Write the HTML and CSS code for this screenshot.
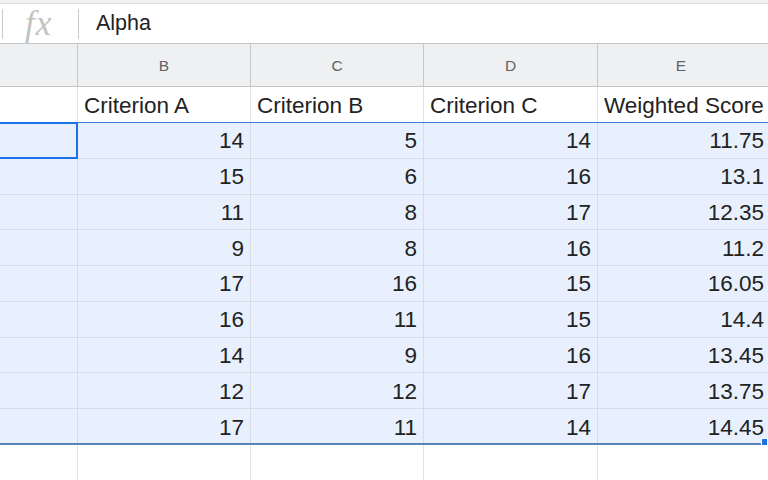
FILE: index.html
```html
<!DOCTYPE html>
<html>
<head>
<meta charset="utf-8">
<link rel="stylesheet" href="styles.css">
</head>
<body>
<div class="topstrip"></div>
<div class="fbar">
  <div class="fdiv first"></div>
  <div class="fx">fx</div>
  <div class="fdiv"></div>
  <div class="fval">Alpha</div>
</div>
<div class="sheet">
  <div class="grid">
    <div class="ch"></div><div class="ch">B</div><div class="ch">C</div><div class="ch">D</div><div class="ch">E</div>
    <div class="c"></div><div class="c t">Criterion A</div><div class="c t">Criterion B</div><div class="c t">Criterion C</div><div class="c t">Weighted Score</div>
    <div class="c s"></div><div class="c s n">14</div><div class="c s n">5</div><div class="c s n">14</div><div class="c s n">11.75</div>
    <div class="c s"></div><div class="c s n">15</div><div class="c s n">6</div><div class="c s n">16</div><div class="c s n">13.1</div>
    <div class="c s"></div><div class="c s n">11</div><div class="c s n">8</div><div class="c s n">17</div><div class="c s n">12.35</div>
    <div class="c s"></div><div class="c s n">9</div><div class="c s n">8</div><div class="c s n">16</div><div class="c s n">11.2</div>
    <div class="c s"></div><div class="c s n">17</div><div class="c s n">16</div><div class="c s n">15</div><div class="c s n">16.05</div>
    <div class="c s"></div><div class="c s n">16</div><div class="c s n">11</div><div class="c s n">15</div><div class="c s n">14.4</div>
    <div class="c s"></div><div class="c s n">14</div><div class="c s n">9</div><div class="c s n">16</div><div class="c s n">13.45</div>
    <div class="c s"></div><div class="c s n">12</div><div class="c s n">12</div><div class="c s n">17</div><div class="c s n">13.75</div>
    <div class="c s"></div><div class="c s n">17</div><div class="c s n">11</div><div class="c s n">14</div><div class="c s n">14.45</div>
    <div class="c"></div><div class="c"></div><div class="c"></div><div class="c"></div><div class="c"></div>
  </div>
  <div class="selection"></div>
  <div class="active"></div>
  <div class="handle"></div>
</div>
</body>
</html>
```
FILE: styles.css
```css
html, body {
  margin: 0;
  padding: 0;
  width: 768px;
  height: 480px;
  overflow: hidden;
  background: #ffffff;
  font-family: "Liberation Sans", Arial, sans-serif;
  color: #222222;
}
.topstrip {
  height: 3px;
  background: #f1f1f1;
  border-bottom: 1px solid #e0e0e0;
}
.fbar {
  height: 39px;
  display: flex;
  align-items: center;
  border-bottom: 1px solid #c4c4c4;
  background: #ffffff;
}
.fdiv {
  width: 1px;
  height: 30px;
  background: #c8c8c8;
}
.fdiv.first {
  margin-left: 2px;
}
.fx {
  width: 75px;
  padding-left: 22px;
  box-sizing: border-box;
  font-family: "Liberation Serif", "DejaVu Serif", serif;
  font-style: italic;
  font-size: 35px;
  letter-spacing: 1px;
  color: #c2c2c2;
  line-height: 1;
  margin-top: -1px;
}
.fval {
  margin-left: 17px;
  font-size: 21.5px;
  color: #202124;
  margin-top: 0;
}
.sheet {
  position: relative;
}
.grid {
  display: grid;
  grid-template-columns: 78px 173px 173px 174px 170px;
  grid-template-rows: 43px 36px repeat(9, 35.78px) 40px;
}
.ch {
  background: #eef0f2;
  border-right: 1px solid #c8c8c8;
  border-bottom: 1px solid #c4c4c4;
  box-sizing: border-box;
  display: flex;
  align-items: center;
  justify-content: center;
  font-family: "Liberation Sans", Arial, sans-serif;
  font-size: 15.5px;
  color: #5f6368;
  padding-top: 1px;
}
.c {
  border-right: 1px solid #e2e3e3;
  border-bottom: 1px solid #e2e3e3;
  box-sizing: border-box;
  font-size: 22.5px;
  display: flex;
  align-items: center;
  padding: 2px 6px 0 6px;
  white-space: nowrap;
  overflow: visible;
}
.c.t {
  padding-left: 6px;
}
.c.s {
  background: #e8f0fe;
  border-right-color: #d6dde8;
  border-bottom-color: #d6dde8;
}
.c.n {
  justify-content: flex-end;
}
.grid > :nth-child(5n) {
  border-right: none;
  padding-right: 4px;
}
.selection {
  position: absolute;
  left: -4px;
  top: 78px;
  width: 790px;
  height: 323px;
  border-top: 1px solid #3d7bd4;
  border-bottom: 2px solid #5a82b5;
  box-sizing: border-box;
  pointer-events: none;
}
.active {
  position: absolute;
  left: -4px;
  top: 78px;
  width: 82px;
  height: 37px;
  border: 2px solid #1a73e8;
  box-sizing: border-box;
}
.handle {
  position: absolute;
  left: 761px;
  top: 394px;
  width: 7px;
  height: 8px;
  background: #1a73e8;
  border: 1px solid #ffffff;
  box-sizing: border-box;
}
```
